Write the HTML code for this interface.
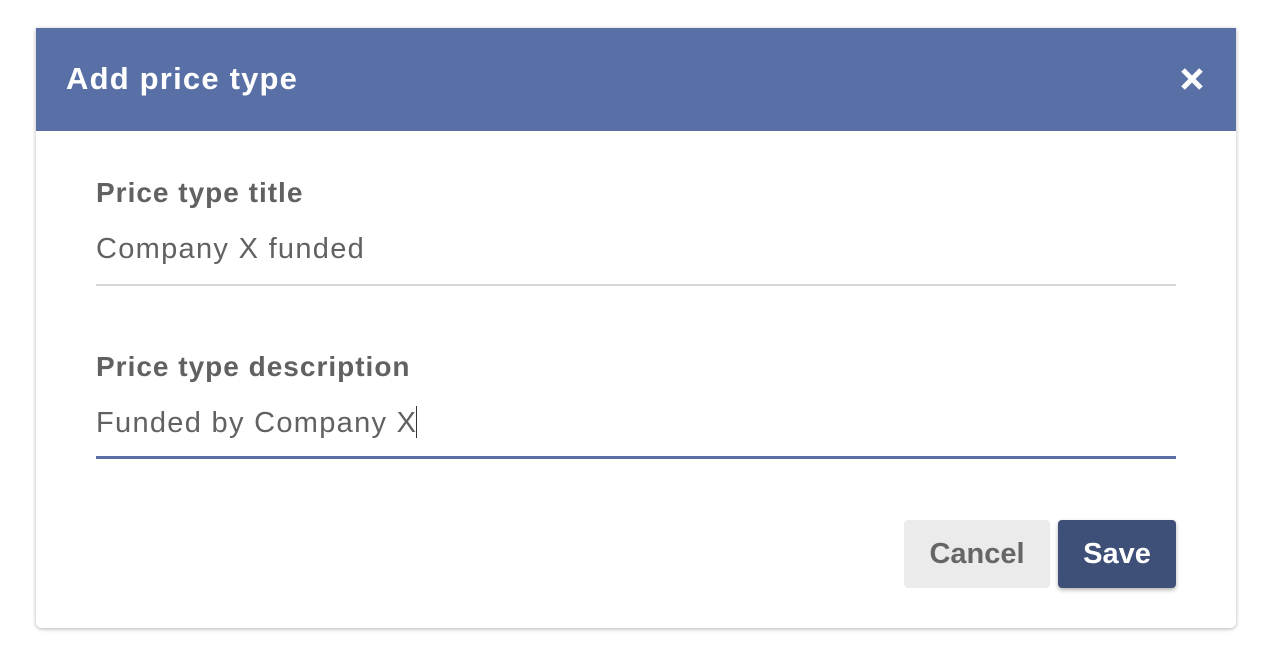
<!DOCTYPE html>
<html><head><style>
body{margin:0;width:1274px;height:670px;background:#fff;font-family:"Liberation Sans",sans-serif;position:relative;overflow:hidden}
.dlg{position:absolute;left:36px;top:28px;width:1200px;height:600px;background:#fff;border-radius:0 0 6px 6px;box-shadow:0 1px 4px rgba(0,0,0,.3)}
.hdr{position:absolute;left:0;top:0;width:1200px;height:103px;background:#5870a6}
.hdr h1{position:absolute;left:30px;top:32px;margin:0;font-size:31px;font-weight:bold;color:#fff;line-height:38px;letter-spacing:1.2px}
.x{position:absolute;left:1144px;top:39px}
.lbl{position:absolute;left:60px;font-size:28px;font-weight:bold;color:#616161;line-height:32px;letter-spacing:1px}
.val{position:absolute;left:60px;font-size:29px;color:#616161;line-height:34px;letter-spacing:1.3px}
.line{position:absolute;left:60px;width:1080px;height:2px;background:#d6d6d6}
.btn{position:absolute;top:492px;height:68px;border-radius:4px;font-size:29px;font-weight:bold;line-height:68px;text-align:center}
</style></head><body>
<div class="dlg">
<div class="hdr"><h1>Add price type</h1>
<svg class="x" width="24" height="24" viewBox="0 0 24 24"><path d="M3 3L21 21M21 3L3 21" stroke="#fff" stroke-width="5"/></svg></div>
<div class="lbl" style="top:149px">Price type title</div>
<div class="val" style="top:204px">Company X funded</div>
<div class="line" style="top:256px"></div>
<div class="lbl" style="top:323px">Price type description</div>
<div class="val" style="top:378px">Funded by Company X<span style="display:inline-block;width:1px;height:32px;background:#333;vertical-align:-6px;margin-left:-1px"></span></div>
<div class="line" style="top:428px;height:3px;background:#5870a6"></div>
<div class="btn" style="left:868px;width:146px;background:#ebebeb;color:#666">Cancel</div>
<div class="btn" style="left:1022px;width:118px;background:#3e4f78;color:#fff;box-shadow:0 2px 4px rgba(0,0,0,.3)">Save</div>
</div>
</body></html>
